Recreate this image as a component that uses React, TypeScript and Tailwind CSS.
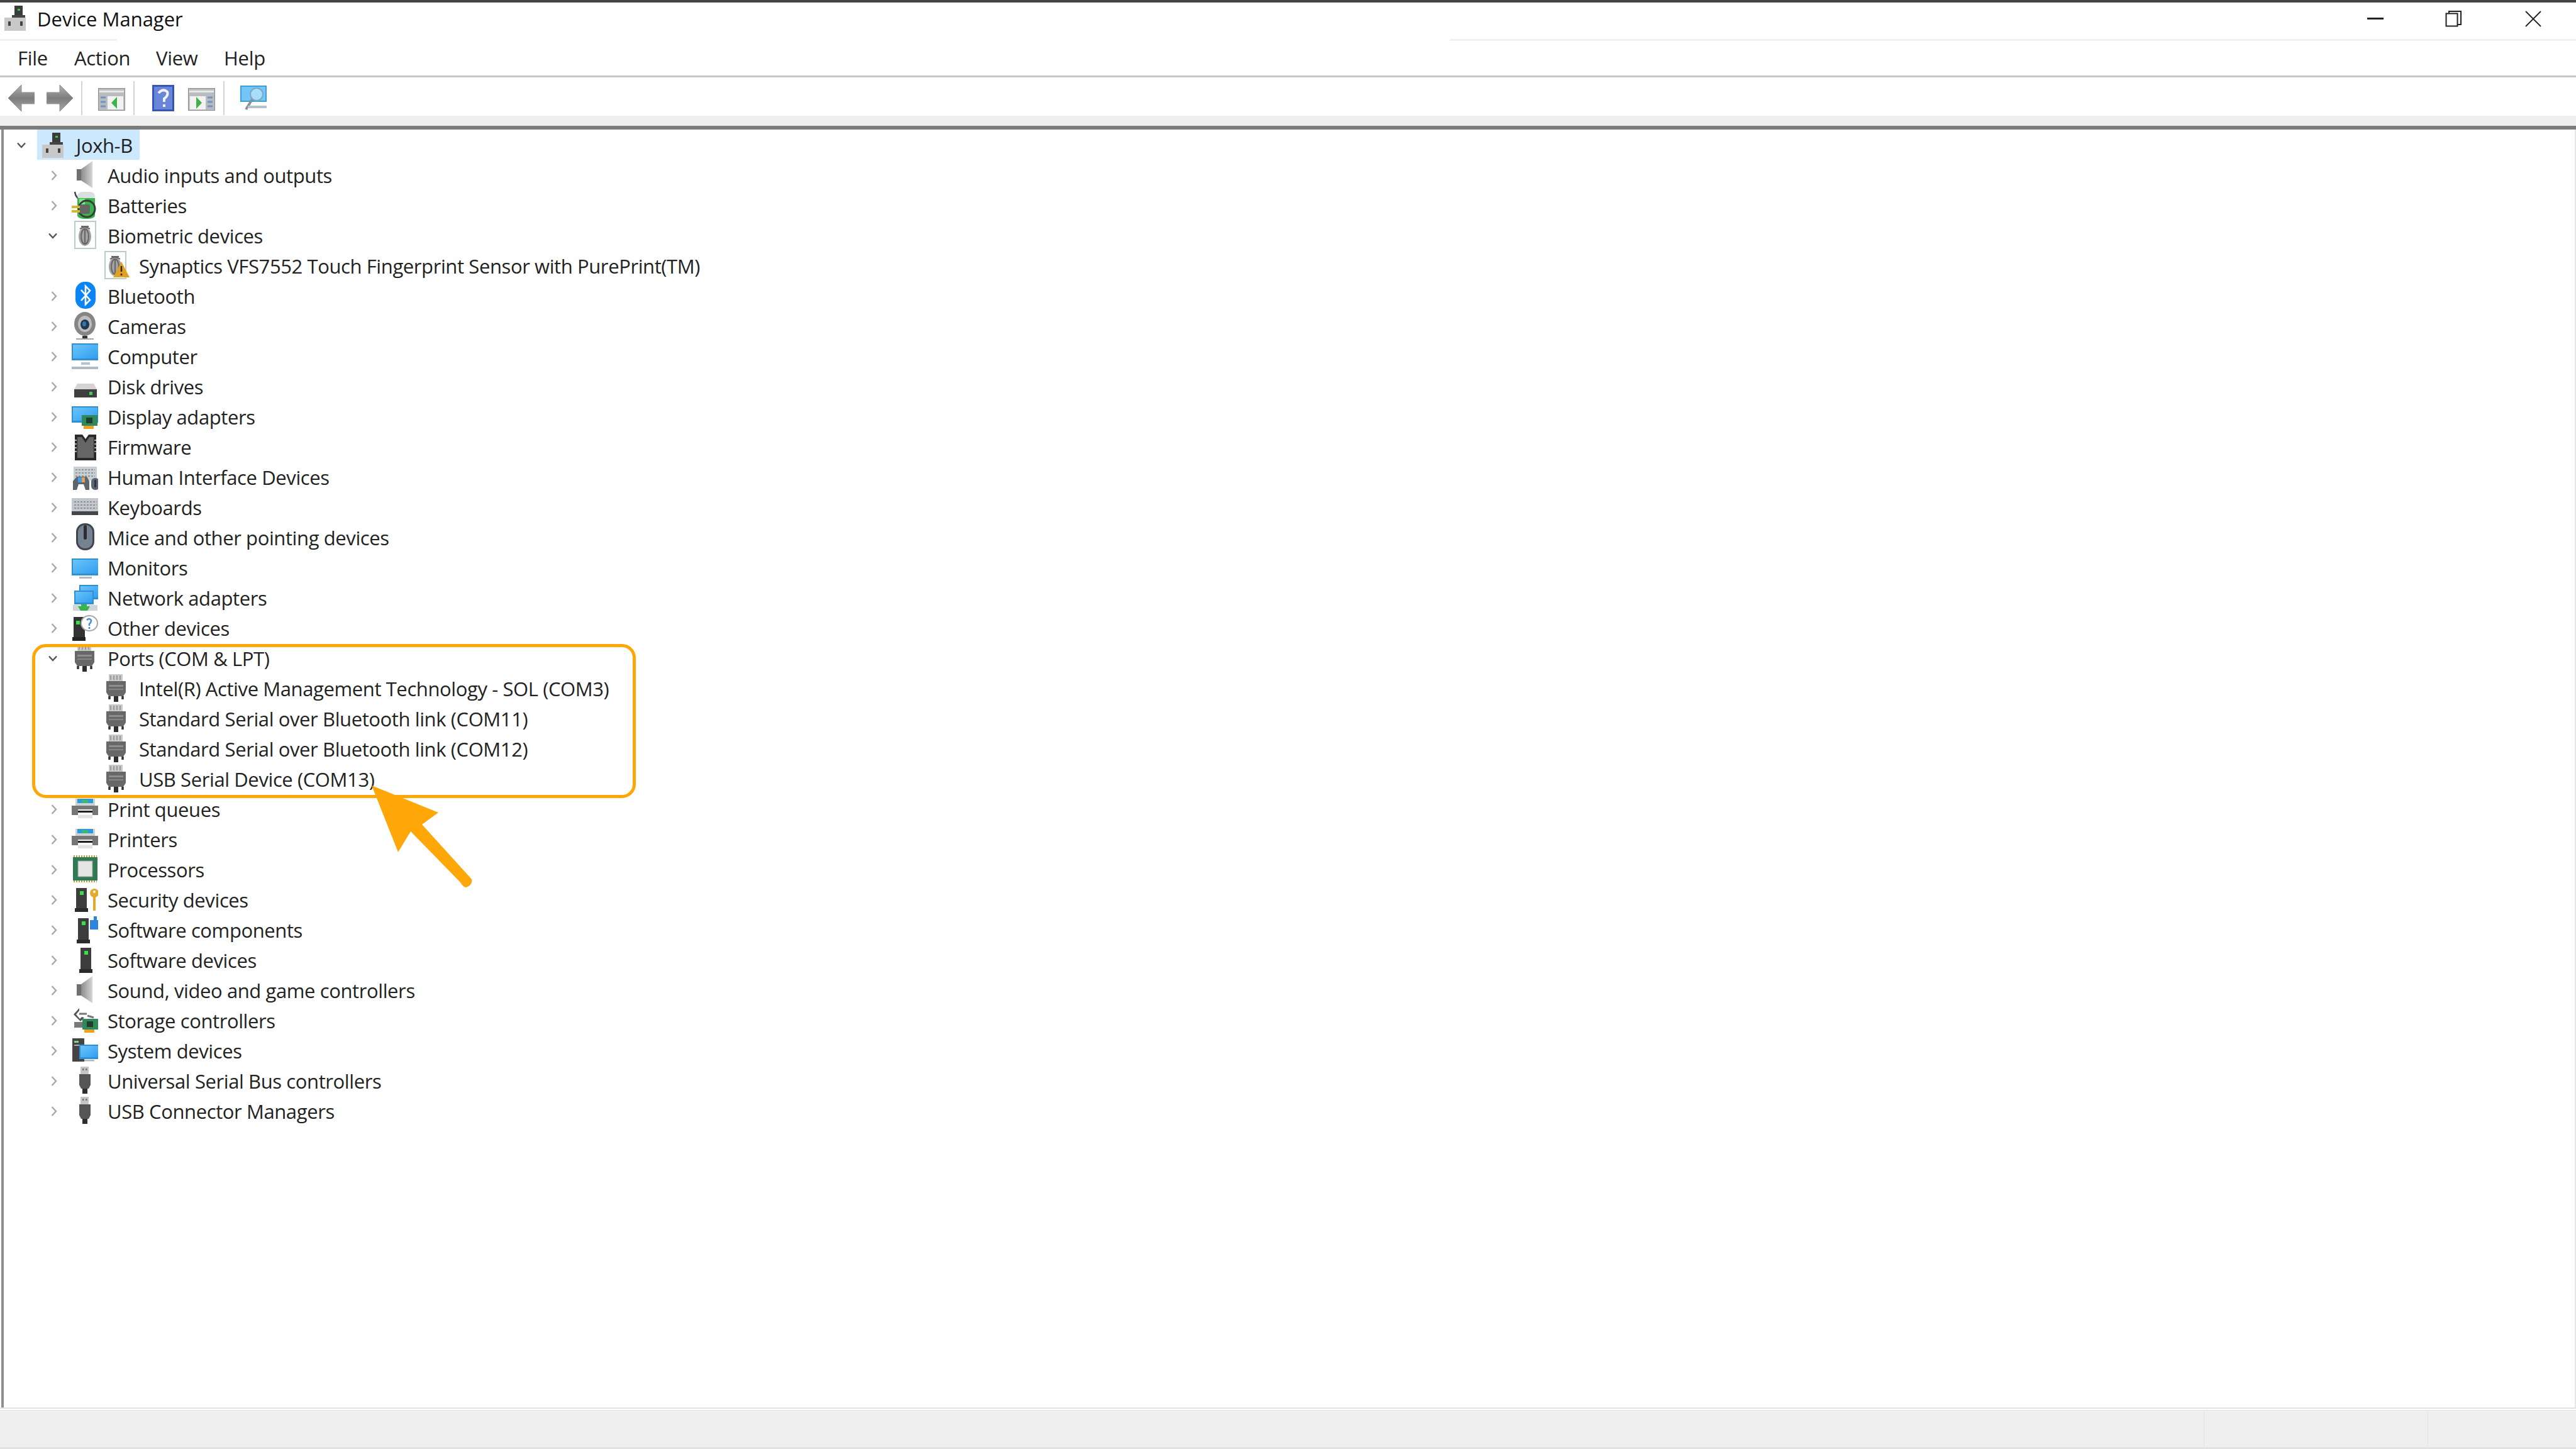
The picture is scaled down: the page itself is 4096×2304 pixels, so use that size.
import type { ReactNode } from 'react';

type IconName =
  | 'pc' | 'speaker' | 'battery' | 'finger' | 'fingerWarn' | 'bluetooth' | 'camera' | 'computer' | 'disk'
  | 'display' | 'chip' | 'hid' | 'keyboard' | 'mouse' | 'monitor' | 'network' | 'other' | 'port' | 'printer'
  | 'cpu' | 'security' | 'component' | 'tower' | 'storage' | 'system' | 'usb';

interface RowData {
  label: string;
  icon: IconName;
  level?: 0 | 1 | 2;
  open?: boolean;
}

const rows: RowData[] = [
  { label: 'Joxh-B', icon: 'pc', level: 0, open: true },
  { label: 'Audio inputs and outputs', icon: 'speaker' },
  { label: 'Batteries', icon: 'battery' },
  { label: 'Biometric devices', icon: 'finger', open: true },
  { label: 'Synaptics VFS7552 Touch Fingerprint Sensor with PurePrint(TM)', icon: 'fingerWarn', level: 2 },
  { label: 'Bluetooth', icon: 'bluetooth' },
  { label: 'Cameras', icon: 'camera' },
  { label: 'Computer', icon: 'computer' },
  { label: 'Disk drives', icon: 'disk' },
  { label: 'Display adapters', icon: 'display' },
  { label: 'Firmware', icon: 'chip' },
  { label: 'Human Interface Devices', icon: 'hid' },
  { label: 'Keyboards', icon: 'keyboard' },
  { label: 'Mice and other pointing devices', icon: 'mouse' },
  { label: 'Monitors', icon: 'monitor' },
  { label: 'Network adapters', icon: 'network' },
  { label: 'Other devices', icon: 'other' },
  { label: 'Ports (COM & LPT)', icon: 'port', open: true },
  { label: 'Intel(R) Active Management Technology - SOL (COM3)', icon: 'port', level: 2 },
  { label: 'Standard Serial over Bluetooth link (COM11)', icon: 'port', level: 2 },
  { label: 'Standard Serial over Bluetooth link (COM12)', icon: 'port', level: 2 },
  { label: 'USB Serial Device (COM13)', icon: 'port', level: 2 },
  { label: 'Print queues', icon: 'printer' },
  { label: 'Printers', icon: 'printer' },
  { label: 'Processors', icon: 'cpu' },
  { label: 'Security devices', icon: 'security' },
  { label: 'Software components', icon: 'component' },
  { label: 'Software devices', icon: 'tower' },
  { label: 'Sound, video and game controllers', icon: 'speaker' },
  { label: 'Storage controllers', icon: 'storage' },
  { label: 'System devices', icon: 'system' },
  { label: 'Universal Serial Bus controllers', icon: 'usb' },
  { label: 'USB Connector Managers', icon: 'usb' },
];

const Screen = ({ x, y, w, h }: { x: number; y: number; w: number; h: number }) => (
  <>
    <rect x={x} y={y} width={w} height={h} fill="#2f8fd0" />
    <rect x={x + 2} y={y + 2} width={w - 4} height={h - 5} fill="url(#screen)" />
  </>
);

const Tower = ({ x, y, h }: { x: number; y: number; h: number }) => (
  <>
    <rect x={x} y={y} width="17" height={h - 6} fill="#3d3d3d" />
    <rect x={x - 2} y={y + h - 6} width="21" height="6" fill="#2b2b2b" />
    <rect x={x + 6} y={y + 5} width="6" height="6" fill="#35e04a" />
  </>
);

const Card = ({ x, y }: { x: number; y: number }) => (
  <>
    <rect x={x} y={y} width="25" height="17" fill="#2f8a5a" />
    <rect x={x + 7} y={y + 4} width="10" height="9" fill="#1f3d30" />
    <rect x={x + 3} y={y + 17} width="16" height="5" fill="#f0a020" />
  </>
);

const fingerprint = (x: number) => (
  <>
    <rect x={x} y="2" width="33" height="43" fill="#fff" stroke="#b7cfc8" strokeWidth="2" />
    <ellipse cx={x + 16} cy="26" rx="10" ry="15" fill="#a2a2a2" />
    <g fill="none" stroke="#666" strokeWidth="2">
      <ellipse cx={x + 16} cy="26" rx="6" ry="12" />
      <path d={`M${x + 16} 15v22M${x + 10} 10h12M${x + 8} 14q8-6 16 0`} />
    </g>
  </>
);

const portShape = (
  <>
    <rect x="9" y="2" width="22" height="11" fill="#c9c9c9" />
    <path d="M12 4v7M17 4v7M22 4v7M27 4v7" stroke="#8a8a8a" strokeWidth="1.500" />
    <path d="M5 13h31v18l-4 6H9l-4-6z" fill="#686868" />
    <rect x="9" y="19" width="23" height="3" fill="#8e8e8e" />
    <rect x="9" y="25" width="23" height="2" fill="#868686" />
    <path d="M10 37v5M31 37v5" stroke="#333" strokeWidth="3.500" />
    <rect x="17" y="37" width="7" height="9" fill="#2d2d2d" />
  </>
);

const icons: Record<IconName, ReactNode> = {
  pc: (
    <>
      <rect x="19" y="5" width="13" height="16" fill="#3c3c3c" />
      <rect x="24" y="10" width="4" height="3" fill="#34c94a" />
      <rect x="15" y="20" width="21" height="5" fill="#444" />
      <rect x="3" y="24" width="34" height="21" fill="#c8c8c8" />
      <rect x="9" y="30" width="4" height="7" fill="#444" />
      <rect x="28" y="30" width="4" height="7" fill="#444" />
    </>
  ),
  speaker: (
    <>
      <rect x="8" y="15" width="7" height="18" fill="#6f6f6f" />
      <path d="M15 15 33 2v43L15 33z" fill="url(#cone)" />
    </>
  ),
  battery: (
    <>
      <path d="M5 3c1 7 4 10 7 11" fill="none" stroke="#444" strokeWidth="2.500" />
      <rect x="9" y="3" width="28" height="13" rx="8" fill="#d9dfe0" />
      <path d="M9 13h28v27q0 6-14 6T9 40z" fill="#35b54a" />
      <rect x="12" y="14" width="9" height="14" fill="#7be888" />
      <circle cx="24" cy="30" r="13" fill="none" stroke="#3a3a3a" strokeWidth="3" />
      <rect x="13" y="23" width="16" height="15" rx="3" fill="#666" />
      <rect x="0" y="25" width="13" height="4" fill="#d0b92e" />
      <rect x="0" y="32" width="13" height="4" fill="#d0b92e" />
    </>
  ),
  finger: fingerprint(5),
  fingerWarn: (
    <>
      {fingerprint(3)}
      <path d="M29 18 42 43H16z" fill="#e0a021" />
      <path d="M29 25v9M29 37v3" stroke="#3a2a10" strokeWidth="2.600" />
    </>
  ),
  bluetooth: (
    <>
      <rect x="6" y="2" width="32" height="43" rx="15" fill="#0b84f5" />
      <path d="M15 15 29 31l-7 7V9l7 7-14 16" fill="none" stroke="#fff" strokeWidth="2.600" />
    </>
  ),
  camera: (
    <>
      <ellipse cx="21" cy="21" rx="17" ry="19" fill="#858585" />
      <ellipse cx="21" cy="21" rx="11" ry="13" fill="#bdbdbd" />
      <ellipse cx="21" cy="22" rx="7" ry="8" fill="#22394d" />
      <ellipse cx="20" cy="21" rx="3" ry="4" fill="#2d77b5" />
      <rect x="17" y="40" width="8" height="4" fill="#333" />
      <rect x="7" y="44" width="28" height="2" fill="#a5a5a5" />
    </>
  ),
  computer: (
    <>
      <Screen x={0} y={4} w={44} h={27} />
      <rect x="15" y="34" width="14" height="4" fill="#b9c3cc" />
      <rect x="0" y="41" width="44" height="4" fill="#aebbc6" />
    </>
  ),
  disk: (
    <>
      <path d="M9 20h26l5 9H4z" fill="#d4d4d4" />
      <rect x="4" y="29" width="36" height="13" fill="#3f3f3f" />
      <rect x="28" y="33" width="5" height="5" fill="#38d455" />
    </>
  ),
  display: (
    <>
      <Screen x={0} y={8} w={43} h={26} />
      <Card x={16} y={22} />
    </>
  ),
  chip: (
    <>
      <path d="M5 5h12l5 7 5-7h12v41H5z" fill="#2a2a2a" />
      <path d="M9 9h7l6 9 6-9h7v33H9z" fill="#666" />
      <path d="M5 14h3M5 20h3M5 26h3M5 32h3M36 14h3M36 20h3M36 26h3M36 32h3" stroke="#d8d8d8" strokeWidth="1.500" />
    </>
  ),
  hid: (
    <>
      <rect x="3" y="8" width="37" height="22" fill="#c9ced3" />
      <path d="M6 13h31M6 18h31M6 23h31" stroke="#8e959b" strokeWidth="2" strokeDasharray="3 2" />
      <path d="M2 45V31l6-7h16l4 7v14h-6l-3-9h-8l-3 9z" fill="#5d666e" />
      <rect x="10" y="25" width="6" height="8" fill="#3f9fe8" />
      <rect x="16" y="25" width="5" height="8" fill="#e8a050" />
      <rect x="31" y="26" width="13" height="19" rx="6" fill="#5a6772" />
      <rect x="36" y="29" width="3" height="12" fill="#2f353a" />
    </>
  ),
  keyboard: (
    <>
      <rect x="0" y="10" width="44" height="21" fill="#c4c8cc" />
      <path d="M4 16h36M4 21h36M4 26h36" stroke="#8b9196" strokeWidth="2" strokeDasharray="3 2" />
      <rect x="0" y="31" width="44" height="6" fill="#40474d" />
    </>
  ),
  mouse: (
    <>
      <rect x="7" y="2" width="29" height="43" rx="14" fill="#3e454c" />
      <rect x="10" y="5" width="23" height="37" rx="11" fill="#75828f" />
      <rect x="19" y="5" width="5" height="23" rx="2.500" fill="#2b2f33" />
    </>
  ),
  monitor: (
    <>
      <Screen x={0} y={10} w={44} h={27} />
      <rect x="12" y="39" width="20" height="3" fill="#aebbc6" />
    </>
  ),
  network: (
    <>
      <Screen x={12} y={4} w={32} h={23} />
      <Screen x={4} y={13} w={31} h={22} />
      <rect x="2" y="36" width="39" height="9" fill="#cfd4d6" />
      <path d="M15 35h9v3h5l-4 7H14l-4-7h5z" fill="#35b54a" />
    </>
  ),
  other: (
    <>
      <rect x="3" y="7" width="18" height="32" fill="#333" />
      <rect x="1" y="39" width="21" height="6" fill="#242424" />
      <rect x="7" y="13" width="6" height="6" fill="#35e04a" />
      <ellipse cx="28" cy="17" rx="13" ry="12" fill="#fff" stroke="#a8a8a8" strokeWidth="2" />
      <path d="M24 12q4-4 7 0 0 4-3 6v3M28 23v3" fill="none" stroke="#4a90d0" strokeWidth="2.600" />
    </>
  ),
  port: portShape,
  printer: (
    <>
      <rect x="6" y="8" width="31" height="12" fill="#c9d2d4" />
      <rect x="9" y="8" width="25" height="7" fill="#2f9ad8" />
      <rect x="16" y="10" width="10" height="5" fill="#35b878" />
      <rect x="0" y="19" width="43" height="15" fill="#767676" />
      <rect x="10" y="25" width="23" height="9" fill="#f6f6f6" />
      <rect x="10" y="27" width="23" height="3" fill="#1f1f1f" />
      <rect x="10" y="34" width="23" height="5" fill="#e2e2e2" />
    </>
  ),
  cpu: (
    <>
      <rect x="2" y="5" width="39" height="37" fill="#2f7a55" />
      <rect x="10" y="11" width="23" height="25" fill="#e4e4e4" stroke="#9a9a9a" />
      <path d="M3 3.500h37M3 43.500h37" stroke="#b8a040" strokeWidth="3" strokeDasharray="2 2" />
    </>
  ),
  security: (
    <>
      <Tower x={7} y={6} h={38} />
      <circle cx="36" cy="14" r="7" fill="#e6a82e" />
      <rect x="34" y="18" width="4" height="24" fill="#e6a82e" />
      <circle cx="36" cy="12" r="2" fill="#fff" />
    </>
  ),
  component: (
    <>
      <Tower x={10} y={6} h={40} />
      <path d="M29 9h6V3h5v6h4v15H29z" fill="#2f84dc" />
    </>
  ),
  tower: <Tower x={14} y={5} h={40} />,
  storage: (
    <>
      <path d="M12 5 3 15l11 11 6-6-4-1-3 3-6-7 5-6z" fill="#555" />
      <path d="M12 14h12M25 17l10 3" stroke="#777" strokeWidth="3" />
      <path d="M4 27h15v9H4z" fill="#7a7a7a" />
      <Card x={17} y={22} />
    </>
  ),
  system: (
    <>
      <rect x="1" y="5" width="19" height="37" fill="#444" />
      <rect x="4" y="9" width="7" height="3" fill="#8bd08a" />
      <rect x="4" y="15" width="13" height="2" fill="#aaa" />
      <Screen x={12} y={15} w={32} h={23} />
      <rect x="20" y="39" width="16" height="2.500" fill="#aebbc6" />
    </>
  ),
  usb: (
    <>
      <rect x="14" y="2" width="13" height="12" fill="#c6c6c6" />
      <rect x="17" y="5" width="2.500" height="3" fill="#777" />
      <rect x="22" y="5" width="2.500" height="3" fill="#777" />
      <path d="M12 14h18v17l-3 6H15l-3-6z" fill="#555" />
      <rect x="17" y="37" width="8" height="8" fill="#2e2e2e" />
    </>
  ),
};

const Icon = ({ name, className = 'h-[48px] w-[44px] shrink-0' }: { name: IconName; className?: string }) => (
  <svg viewBox="-2 0 44 48" className={className}>
    {icons[name]}
  </svg>
);

const Chevron = ({ open }: { open?: boolean }) =>
  open ? (
    <svg viewBox="0 0 14 10" className="mt-[2px] h-[10px] w-[14px]">
      <path d="M1 1.500 7 8l6-6.500" fill="none" stroke="#555" strokeWidth="2.400" />
    </svg>
  ) : (
    <svg viewBox="0 0 10 16" className="ml-[3px] mt-[2px] h-[16px] w-[10px]">
      <path d="M1.500 1 8 8l-6.500 7" fill="none" stroke="#a8a8a8" strokeWidth="2.400" />
    </svg>
  );

const indents = ['pl-0', 'pl-[50px]', 'pl-[100px]'];

const TreeRow = ({ label, icon, level = 1, open }: RowData) => (
  <div className={`flex h-[48px] items-center ${indents[level]}`}>
    <div className="flex h-full w-[48px] shrink-0 items-center justify-center">
      {level < 2 && <Chevron open={open} />}
    </div>
    <div className={`ml-px flex h-full items-center pl-[3px] pr-[11px] ${level === 0 ? 'bg-[#cce8ff]' : ''}`}>
      <Icon name={icon} />
      <span className="ml-[15px] pt-[3px] tracking-[-0.4px] whitespace-nowrap">{label}</span>
    </div>
  </div>
);

const ToolbarWindow = ({ flip }: { flip?: boolean }) => (
  <svg viewBox="0 0 43 36" className="h-[36px] w-[43px] shrink-0">
    <g transform={flip ? 'translate(43 0) scale(-1 1)' : undefined}>
      <rect x="0.500" y="0.500" width="42" height="35" fill="#b9bcbf" stroke="#8c8c8c" />
      <rect x="2" y="4" width="39" height="3" fill="#e8e8e8" />
      <rect x="15" y="13" width="25" height="21" fill="#f2f2f2" />
      <path d="M4 15h8M4 22h8M4 29h8" stroke="#6f93c8" strokeWidth="3" />
      <path d="M30 14v19l-9-9.500z" fill="#3fb24a" />
    </g>
  </svg>
);

const ToolbarArrow = ({ right }: { right?: boolean }) => (
  <svg viewBox="0 0 42 42" className="h-[42px] w-[42px] shrink-0">
    <g transform={right ? 'translate(42 0) scale(-1 1)' : undefined}>
      <path d="M21 0v12h21v18H21v12L0 21z" fill="url(#arrow)" stroke="#8f8f8f" />
    </g>
  </svg>
);

const Sep = () => <div className="h-[54px] w-[2px] shrink-0 bg-[#d4d4d4]" />;

export default function App() {
  return (
    <div className="relative flex h-[2304px] w-[4096px] flex-col overflow-hidden bg-white font-['Open_Sans','Liberation_Sans',sans-serif] text-[31px] text-[#222]">
      <svg className="absolute h-0 w-0">
        <defs>
          <linearGradient id="screen" x1="0" y1="0" x2="1" y2="1">
            <stop offset="0" stopColor="#6cc4fb" />
            <stop offset="1" stopColor="#2f9ef0" />
          </linearGradient>
          <linearGradient id="cone" x1="0" y1="0" x2="1" y2="0">
            <stop offset="0" stopColor="#8c8c8c" />
            <stop offset="1" stopColor="#d6d6d6" />
          </linearGradient>
          <linearGradient id="arrow" x1="0" y1="0" x2="0" y2="1">
            <stop offset="0" stopColor="#b4b4b4" />
            <stop offset="0.500" stopColor="#7c7c7c" />
            <stop offset="1" stopColor="#a8a8a8" />
          </linearGradient>
        </defs>
      </svg>

      <div className="h-[4px] shrink-0 bg-[#444]" />

      {/* title bar */}
      <div className="flex h-[58px] shrink-0 items-center">
        <Icon name="pc" className="ml-[2px] h-[48px] w-[44px] shrink-0 self-start" />
        <span className="ml-[13px] pb-[6px] text-[#111]">Device Manager</span>
        <div className="ml-auto flex items-center pb-[6px]">
          <svg viewBox="0 0 26 4" className="h-[4px] w-[26px]"><rect width="26" height="3" fill="#222" /></svg>
          <svg viewBox="0 0 26 26" className="ml-[98px] h-[26px] w-[26px]">
            <path d="M6 4V1h19v21h-5M1.500 4.500h18v20h-18z" fill="none" stroke="#222" strokeWidth="2" />
          </svg>
          <svg viewBox="0 0 26 26" className="ml-[101px] mr-[55px] h-[26px] w-[26px]">
            <path d="M1 1 25 25M25 1 1 25" stroke="#222" strokeWidth="1.800" />
          </svg>
        </div>
      </div>
      <div className="flex h-[3px] shrink-0">
        <div className="w-[186px] bg-[#f0f0f0]" />
        <div className="w-[2119px]" />
        <div className="flex-1 bg-[#f0f0f0]" />
      </div>

      {/* menu */}
      <div className="flex h-[55px] shrink-0 items-center pl-[28px] tracking-[-0.3px]">
        <span className="w-[90px]">File</span>
        <span className="w-[130px]">Action</span>
        <span className="w-[108px]">View</span>
        <span>Help</span>
      </div>
      <div className="h-[3px] shrink-0 bg-[#c6c6c6]" />

      {/* toolbar */}
      <div className="flex h-[61px] shrink-0 items-center pl-[13px] pt-[5px]">
        <ToolbarArrow />
        <div className="ml-[19px]"><ToolbarArrow right /></div>
        <div className="ml-[13px]"><Sep /></div>
        <div className="ml-[25px] pt-[4px]"><ToolbarWindow /></div>
        <div className="ml-[13px]"><Sep /></div>
        <svg viewBox="0 0 35 42" className="ml-[28px] h-[42px] w-[35px] shrink-0">
          <rect width="35" height="42" fill="#3555b8" />
          <rect x="3" y="3" width="29" height="36" fill="#6a86da" />
          <path d="M10 13q7-8 14-2 2 6-5 11v5M19 31v4" fill="none" stroke="#f2f2f2" strokeWidth="4" />
        </svg>
        <div className="ml-[22px] pt-[4px]"><ToolbarWindow flip /></div>
        <div className="ml-[13px]"><Sep /></div>
        <svg viewBox="0 0 42 40" className="ml-[25px] h-[40px] w-[42px] shrink-0">
          <rect x="0" y="0" width="42" height="26" fill="#3f9ed8" />
          <rect x="2" y="2" width="38" height="22" fill="#73c6fa" />
          <circle cx="26" cy="14" r="10" fill="#a8dcfb" stroke="#7fa8c0" strokeWidth="2" />
          <path d="M19 22 9 38" stroke="#8a8f96" strokeWidth="4" />
          <rect x="12" y="32" width="30" height="4" fill="#b8c0c8" />
        </svg>
      </div>
      <div className="h-[16px] shrink-0 bg-[#efefef]" />
      <div className="h-[6px] shrink-0 bg-[#7c7c7c]" />

      {/* tree */}
      <div className="ml-[2px] min-h-0 flex-1 border-l-[4px] border-r-[2px] border-l-[#8e8e8e] border-r-[#e6e6e6] pl-[4px]">
        {rows.map((row) => (
          <TreeRow key={row.label + row.icon} {...row} />
        ))}
      </div>

      {/* status bar */}
      <div className="flex h-[66px] shrink-0 flex-col border-t-[2px] border-[#e2e2e2]">
        <div className="h-[3px] shrink-0 border-b border-[#e2e2e2] bg-white" />
        <div className="flex flex-1 border-b-[3px] border-[#e2e2e2] bg-[#efefef]">
          <div className="w-[3505px] border-r border-[#e4e4e4]" />
          <div className="w-[356px] border-r border-[#e4e4e4]" />
        </div>
      </div>

      {/* callout drawn over the tree */}
      <div className="absolute left-[51px] top-[1024px] h-[245px] w-[960px] rounded-[22px] border-[5px] border-[#ffa708]" />
      <svg viewBox="585 1245 170 170" className="absolute left-[585px] top-[1245px] h-[170px] w-[170px]">
        <path
          d="M591 1249 697 1292 671 1311 750 1398Q752 1407 741 1411 736 1410 732 1403L653 1322 633 1355z"
          fill="#ffa708"
        />
      </svg>
    </div>
  );
}
